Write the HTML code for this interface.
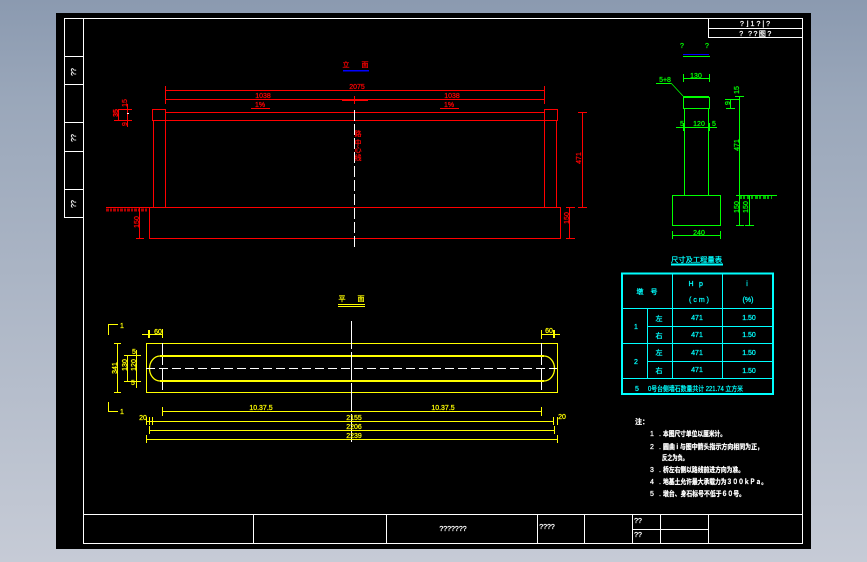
<!DOCTYPE html>
<html><head><meta charset="utf-8"><style>
html,body{margin:0;padding:0;width:867px;height:562px;overflow:hidden;background:linear-gradient(#8b9ab0 0,#9aa7ba 100px,#c6cbd6 562px)}
svg{position:absolute;left:0;top:0;display:block}
text{font-family:"Liberation Sans","Noto Sans CJK SC",sans-serif;font-size:7px;text-anchor:middle;stroke-width:.25}
.g line,.g path,.g rect,.g polyline{fill:none}
.w line,.w rect{stroke:#fff}.w text{fill:#fff;stroke:#fff}
.r line,.r rect,.r path{stroke:#f00}.r text{fill:#f00;stroke:#f00}
.n line,.n rect,.n path{stroke:#0f0}.n text{fill:#0f0;stroke:#0f0}
.c line,.c rect{stroke:#0ff}.c text{fill:#0ff;stroke:#0ff}
.y line,.y rect,.y path{stroke:#ff0}.y text{fill:#ff0;stroke:#ff0}
.s{text-anchor:start}
</style></head><body>
<svg width="867" height="562" viewBox="0 0 867 562" xmlns="http://www.w3.org/2000/svg">
<rect x="56" y="13" width="755" height="536" fill="#000"/>
<g class="g" stroke-width="1" shape-rendering="crispEdges">
<!-- frame -->
<g class="w">
<line x1="64" y1="18.5" x2="803" y2="18.5"/>
<line x1="802.5" y1="18" x2="802.5" y2="544"/>
<line x1="83.5" y1="18" x2="83.5" y2="544"/>
<line x1="83" y1="543.5" x2="803" y2="543.5"/>
<line x1="64.5" y1="18" x2="64.5" y2="218"/>
<line x1="64" y1="56.5" x2="84" y2="56.5"/><line x1="64" y1="84.5" x2="84" y2="84.5"/>
<line x1="64" y1="122.5" x2="84" y2="122.5"/><line x1="64" y1="151.5" x2="84" y2="151.5"/>
<line x1="64" y1="189.5" x2="84" y2="189.5"/><line x1="64" y1="217.5" x2="84" y2="217.5"/>
<line x1="708.5" y1="18" x2="708.5" y2="38"/>
<line x1="708" y1="28.5" x2="803" y2="28.5"/><line x1="708" y1="37.5" x2="803" y2="37.5"/>
<line x1="83" y1="514.5" x2="803" y2="514.5"/>
<line x1="253.5" y1="514" x2="253.5" y2="544"/><line x1="386.5" y1="514" x2="386.5" y2="544"/>
<line x1="537.5" y1="514" x2="537.5" y2="544"/><line x1="584.5" y1="514" x2="584.5" y2="544"/>
<line x1="632.5" y1="514" x2="632.5" y2="544"/><line x1="660.5" y1="514" x2="660.5" y2="544"/>
<line x1="708.5" y1="514" x2="708.5" y2="544"/><line x1="632" y1="529.5" x2="708" y2="529.5"/>
<text x="453" y="531" font-size="7">???????</text>
<text x="547" y="529" font-size="8">????</text>
<text x="638" y="523" font-size="8">??</text><text x="638" y="537" font-size="8">??</text>
<text x="756" y="26" style="letter-spacing:2px">?⌋1?|?</text>
<text x="756" y="36" style="letter-spacing:1.5px">? ??图?</text>
<text transform="translate(76,72) rotate(-90)" font-size="8">??</text>
<text transform="translate(76,138) rotate(-90)" font-size="8">??</text>
<text transform="translate(76,204) rotate(-90)" font-size="8">??</text>
<!-- notes -->
<text x="642" y="424" font-size="8" font-weight="bold">注：</text>
<text x="652" y="436" font-size="7">1</text><text x="660" y="436" font-size="7">.</text><text class="s" x="663" y="436" font-size="7" font-weight="bold" textLength="63" lengthAdjust="spacingAndGlyphs">本图尺寸单位以厘米计。</text>
<text x="652" y="449" font-size="7">2</text><text x="660" y="449" font-size="7">.</text><text class="s" x="663" y="449" font-size="7" font-weight="bold" textLength="100" lengthAdjust="spacingAndGlyphs">圆曲 i 与图中箭头指示方向相同为正，</text>
<text class="s" x="662" y="460" font-size="7" font-weight="bold" textLength="26" lengthAdjust="spacingAndGlyphs">反之为负。</text>
<text x="652" y="472" font-size="7">3</text><text x="660" y="472" font-size="7">.</text><text class="s" x="663" y="472" font-size="7" font-weight="bold" textLength="81" lengthAdjust="spacingAndGlyphs">桥左右侧以路线前进方向为准。</text>
<text x="652" y="484" font-size="7">4</text><text x="660" y="484" font-size="7">.</text><text class="s" x="663" y="484" font-size="7" font-weight="bold" textLength="104" lengthAdjust="spacingAndGlyphs">地基土允许最大承载力为３００ｋＰａ。</text>
<text x="652" y="496" font-size="7">5</text><text x="660" y="496" font-size="7">.</text><text class="s" x="663" y="496" font-size="7" font-weight="bold" textLength="82" lengthAdjust="spacingAndGlyphs">墩台、身石标号不低于６０号。</text>
</g>
<!-- red elevation -->
<g class="r">
<text x="346" y="67" font-size="9">立</text><text x="365" y="67" font-size="9">面</text>
<line x1="343" y1="70.5" x2="369" y2="70.5" style="stroke:#00f" stroke-width="1.5"/>
<line x1="165" y1="90.5" x2="544" y2="90.5" stroke-width="1"/>
<line x1="165.5" y1="86" x2="165.5" y2="95"/><line x1="544.5" y1="86" x2="544.5" y2="104"/>
<line x1="165" y1="99.5" x2="544" y2="99.5"/><line x1="165.5" y1="95" x2="165.5" y2="104"/>
<line x1="354.5" y1="96" x2="354.5" y2="104"/>
<line x1="342" y1="100" x2="368" y2="100" stroke-width="2"/>
<text x="357" y="89">2075</text><text x="263" y="98">1038</text><text x="452" y="98">1038</text>
<text x="260" y="107">1%</text><text x="449" y="107">1%</text>
<line x1="251" y1="108.5" x2="270" y2="108.5"/><line x1="440" y1="108.5" x2="459" y2="108.5"/>
<line x1="165" y1="112.5" x2="544" y2="112.5"/><line x1="153" y1="120.5" x2="556" y2="120.5"/>
<rect x="152.5" y="109.5" width="13" height="11"/><rect x="544.5" y="109.5" width="13" height="11"/>
<line x1="153.5" y1="120" x2="153.5" y2="207"/><line x1="165.5" y1="120" x2="165.5" y2="207"/>
<line x1="544.5" y1="120" x2="544.5" y2="207"/><line x1="556.5" y1="120" x2="556.5" y2="207"/>
<line x1="106" y1="207.5" x2="560" y2="207.5"/>
<line x1="106" y1="210" x2="148" y2="210" stroke-dasharray="3 1 2 1" stroke-width="3" opacity=".7"/>
<rect x="149.5" y="207.5" width="411" height="31"/>
<line x1="139.5" y1="207" x2="139.5" y2="238"/><line x1="136" y1="238.5" x2="144" y2="238.5"/>
<text transform="translate(139,222) rotate(-90)">150</text>
<line x1="127.5" y1="104" x2="127.5" y2="127"/><line x1="118" y1="109.5" x2="132" y2="109.5"/><line x1="114" y1="120.5" x2="132" y2="120.5"/>
<line x1="118.5" y1="109" x2="118.5" y2="120"/>
<text transform="translate(127,103) rotate(-90)">15</text><text transform="translate(118,113) rotate(-90)" font-weight="bold">35</text><text transform="translate(127,124) rotate(-90)">9</text>
<line x1="127" y1="113.5" x2="129" y2="113.5" style="stroke:#fff"/>
<text x="358" y="136">路</text><text x="358" y="145">中</text><text x="358" y="152">心</text><text x="358" y="160">线</text>
<line x1="569.5" y1="207" x2="569.5" y2="238"/><line x1="566" y1="207.5" x2="575" y2="207.5"/><line x1="566" y1="238.5" x2="575" y2="238.5"/>
<text transform="translate(569,218) rotate(-90)">150</text>
<line x1="582.5" y1="112" x2="582.5" y2="207"/><line x1="578" y1="112.5" x2="587" y2="112.5"/><line x1="578" y1="207.5" x2="587" y2="207.5"/>
<text transform="translate(581,158) rotate(-90)">471</text>
<line x1="354.5" y1="110" x2="354.5" y2="248" stroke-dasharray="11 3" style="stroke:#fff"/>
</g>
<!-- green -->
<g class="n">
<text x="682" y="48" font-size="8">?</text><text x="707" y="48" font-size="8">?</text>
<line x1="683" y1="54.5" x2="709" y2="54.5" style="stroke:#00f"/><line x1="683" y1="56.5" x2="710" y2="56.5"/>
<line x1="683" y1="78.5" x2="710" y2="78.5"/><line x1="683.5" y1="74" x2="683.5" y2="82"/><line x1="709.5" y1="74" x2="709.5" y2="82"/>
<text x="696" y="78">130</text>
<text x="665" y="82" font-size="7">5+8</text>
<line x1="656" y1="83.5" x2="671" y2="83.5"/>
<path d="M671 83L683 96" shape-rendering="auto" stroke-width=".8"/>
<line x1="683" y1="97" x2="709" y2="97" stroke-width="2"/>
<rect x="683.5" y="97.5" width="26" height="11"/>
<line x1="684.5" y1="108" x2="684.5" y2="195"/><line x1="708.5" y1="108" x2="708.5" y2="195"/>
<line x1="676" y1="127.5" x2="717" y2="127.5"/>
<text x="682" y="126">5</text><text x="699" y="126">120</text><text x="714" y="126">5</text>
<line x1="684" y1="123" x2="684" y2="131" stroke-width="2"/><line x1="709" y1="123" x2="709" y2="131" stroke-width="2"/>
<rect x="672.5" y="195.5" width="48" height="30"/>
<line x1="672" y1="235.5" x2="720" y2="235.5"/><line x1="672.5" y1="231" x2="672.5" y2="239"/><line x1="720.5" y1="231" x2="720.5" y2="239"/>
<text x="699" y="235">240</text>
<line x1="739.5" y1="96" x2="739.5" y2="225"/><line x1="735" y1="96.5" x2="744" y2="96.5"/><line x1="725" y1="99.5" x2="740" y2="99.5"/>
<line x1="730.5" y1="99" x2="730.5" y2="108"/><line x1="726" y1="108.5" x2="735" y2="108.5"/>
<text transform="translate(739,90) rotate(-90)">15</text><text transform="translate(730,103) rotate(-90)">9</text><text transform="translate(739,145) rotate(-90)">471</text>
<line x1="736" y1="195.5" x2="777" y2="195.5"/>
<line x1="739" y1="197.5" x2="772" y2="197.5" stroke-dasharray="3 1 2 2" stroke-width="3" opacity=".7"/>
<line x1="749.5" y1="195" x2="749.5" y2="225"/><line x1="745" y1="225.5" x2="754" y2="225.5"/><line x1="736" y1="225.5" x2="744" y2="225.5"/>
<text transform="translate(739,207) rotate(-90)">150</text><text transform="translate(748,207) rotate(-90)">150</text>
</g>
<!-- cyan table -->
<g class="c">
<text class="s" x="671" y="262" font-size="7.5" textLength="51" lengthAdjust="spacingAndGlyphs">尺寸及工程量表</text>
<line x1="671" y1="264.5" x2="723" y2="264.5" stroke-width="2"/>
<rect x="622" y="273.5" width="151" height="120.5" stroke-width="2"/>
<line x1="672.5" y1="273" x2="672.5" y2="378"/><line x1="722.5" y1="273" x2="722.5" y2="378"/><line x1="647.5" y1="308" x2="647.5" y2="378"/>
<line x1="622" y1="308.5" x2="773" y2="308.5"/><line x1="647" y1="326.5" x2="773" y2="326.5"/>
<line x1="622" y1="343.5" x2="773" y2="343.5"/><line x1="647" y1="361.5" x2="773" y2="361.5"/>
<line x1="622" y1="378.5" x2="773" y2="378.5"/>
<text x="640" y="294" font-size="9">墩</text><text x="654" y="294" font-size="9">号</text>
<text x="691" y="286" font-size="9">H</text><text x="701" y="286" font-size="9">p</text><text class="s" x="689" y="302" font-size="8" textLength="20">(cm)</text>
<text x="747" y="286" font-size="9">i</text><text x="748" y="302" font-size="8">(%)</text>
<text x="636" y="329" font-size="9">1</text><text x="636" y="364" font-size="9">2</text>
<text x="659" y="321" font-size="8">左</text><text x="659" y="338" font-size="8">右</text><text x="659" y="355" font-size="8">左</text><text x="659" y="373" font-size="8">右</text>
<text x="697" y="320">471</text><text x="697" y="337">471</text><text x="697" y="355">471</text><text x="697" y="372">471</text>
<text x="749" y="320" font-size="8">1.50</text><text x="749" y="337" font-size="8">1.50</text><text x="749" y="355" font-size="8">1.50</text><text x="749" y="373" font-size="8">1.50</text>
<text x="637" y="391">5</text><text class="s" x="648" y="391" font-size="7" textLength="95" lengthAdjust="spacingAndGlyphs">0号台侧墙石数量共计 221.74 立方米</text>
</g>
<!-- yellow plan -->
<g class="y">
<text x="342" y="301" font-size="9">平</text><text x="361" y="301" font-size="9">面</text>
<line x1="338" y1="304.5" x2="365" y2="304.5"/><line x1="338" y1="306.5" x2="365" y2="306.5"/>
<rect x="146.5" y="343.5" width="411" height="49"/>
<line x1="162.5" y1="343" x2="162.5" y2="392" style="stroke:#fff" stroke-dasharray="22 3"/>
<line x1="541.5" y1="343" x2="541.5" y2="392" style="stroke:#fff" stroke-dasharray="22 3"/>
<line x1="160" y1="356" x2="544" y2="356" stroke-width="2"/><line x1="160" y1="381" x2="544" y2="381" stroke-width="2"/>
<path d="M160 356A10.5 12.5 0 0 0 160 381" shape-rendering="auto" stroke-width="1.3"/>
<path d="M544 356A10.5 12.5 0 0 1 544 381" shape-rendering="auto" stroke-width="1.3"/>
<line x1="146" y1="368.5" x2="557" y2="368.5" style="stroke:#fff" stroke-dasharray="9 4"/>
<line x1="351.5" y1="321" x2="351.5" y2="442" style="stroke:#fff" stroke-dasharray="28 3"/>
<line x1="142" y1="334.5" x2="162" y2="334.5"/><line x1="162.5" y1="329" x2="162.5" y2="338"/><line x1="149" y1="330" x2="149" y2="338" stroke-width="2"/>
<text x="158" y="334">60</text>
<line x1="541" y1="334.5" x2="560" y2="334.5"/><line x1="541.5" y1="330" x2="541.5" y2="339"/><line x1="554" y1="330" x2="554" y2="338" stroke-width="2"/>
<text x="549" y="333">60</text>
<path d="M118 324.5H108.5V335M108.5 402V411.5H118"/>
<text x="122" y="328">1</text><text x="122" y="414">1</text>
<line x1="117.5" y1="343" x2="117.5" y2="392"/><line x1="114" y1="343.5" x2="121" y2="343.5"/><line x1="114" y1="392.5" x2="121" y2="392.5"/>
<text transform="translate(117,368) rotate(-90)">341</text>
<line x1="127.5" y1="355" x2="127.5" y2="381"/><line x1="124" y1="355.5" x2="141" y2="355.5"/><line x1="124" y1="381.5" x2="141" y2="381.5"/>
<line x1="136.5" y1="350" x2="136.5" y2="388"/>
<text transform="translate(127,365) rotate(-90)">130</text><text transform="translate(136,365) rotate(-90)">120</text>
<text x="134" y="354">5</text><text x="133" y="385">5</text>
<line x1="162" y1="411.5" x2="541" y2="411.5"/><line x1="162.5" y1="407" x2="162.5" y2="416"/><line x1="541.5" y1="407" x2="541.5" y2="416"/>
<text x="261" y="410">10.37.5</text><text x="443" y="410">10.37.5</text>
<line x1="147" y1="421.5" x2="554" y2="421.5"/>
<line x1="146.5" y1="417" x2="146.5" y2="425"/><line x1="149.5" y1="417" x2="149.5" y2="425"/><line x1="152.5" y1="417" x2="152.5" y2="425"/>
<line x1="553.5" y1="417" x2="553.5" y2="425"/><line x1="557.5" y1="417" x2="557.5" y2="425"/>
<text x="143" y="420" font-size="6">20</text><text x="562" y="419" font-size="6">20</text><text x="354" y="420">2155</text>
<line x1="149" y1="430.5" x2="555" y2="430.5"/><line x1="149.5" y1="426" x2="149.5" y2="434"/><line x1="554.5" y1="426" x2="554.5" y2="434"/>
<text x="354" y="429">2206</text>
<line x1="146" y1="439.5" x2="557" y2="439.5"/><line x1="146.5" y1="435" x2="146.5" y2="443"/><line x1="557.5" y1="435" x2="557.5" y2="443"/>
<text x="354" y="438">2239</text>
</g>
</g>
</svg>
</body></html>
